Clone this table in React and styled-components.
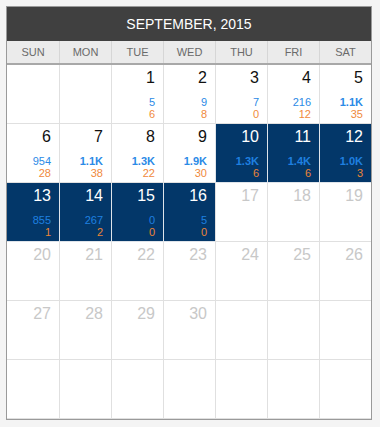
import React from 'react';
import styled, { createGlobalStyle } from 'styled-components';

const GlobalStyle = createGlobalStyle`
    body {
        margin: 0;
        padding: 6px;
        background: #f4f4f4;
        font-family: 'Liberation Sans', Arial, sans-serif;
    }
`;

const Calendar = styled.div`
    width: 364px;
    border: 1px solid #9a9a9a;
    background: #fff;
`;

const Title = styled.div`
    height: 34px;
    background: #404040;
    color: #fff;
    font-size: 14px;
    display: flex;
    align-items: center;
    justify-content: center;
`;

const DayNames = styled.div`
    display: grid;
    grid-template-columns: repeat(7, 52px);
    height: 22px;
    background: #ebebeb;
    border-bottom: 2px solid #a8a8a8;
`;

const DayName = styled.div`
    display: flex;
    align-items: center;
    justify-content: center;
    font-size: 11px;
    color: #6a6a6a;
    border-left: ${p => (p.$first ? 'none' : '1px solid #d6d6d6')};
`;

const Grid = styled.div`
    display: grid;
    grid-template-columns: repeat(7, 52px);
    grid-auto-rows: 59px;
`;

const Cell = styled.div`
    display: flex;
    flex-direction: column;
    align-items: flex-end;
    padding: 4px 8px 0 0;
    box-sizing: border-box;
    background: ${p => (p.$active ? '#033769' : '#fff')};
    border-left: ${p => (p.$first ? 'none' : `1px solid ${p.$active ? '#dfe4ea' : '#e0e0e0'}`)};
    border-bottom: 1px solid ${p => (p.$active ? '#dfe4ea' : '#e0e0e0')};
`;

const DayNum = styled.div`
    font-size: 16px;
    line-height: 18px;
    color: ${p => (p.$active ? '#fff' : p.$future ? '#c8c8c8' : '#111')};
`;

const Counts = styled.div`
    margin-top: 9px;
    display: flex;
    flex-direction: column;
    align-items: flex-end;
    font-size: 11px;
    line-height: 12px;
`;

const Visits = styled.span`
    color: ${p => (p.$active ? '#1f80e0' : '#2b8ae6')};
    font-weight: ${p => (p.$bold ? 'bold' : 'normal')};
`;

const Sales = styled.span`
    color: ${p => (p.$active ? '#ea8536' : '#f08a3c')};
`;

const stats = {
    1: ['5', '6'], 2: ['9', '8'], 3: ['7', '0'], 4: ['216', '12'], 5: ['1.1K', '35'],
    6: ['954', '28'], 7: ['1.1K', '38'], 8: ['1.3K', '22'], 9: ['1.9K', '30'],
    10: ['1.3K', '6'], 11: ['1.4K', '6'], 12: ['1.0K', '3'],
    13: ['855', '1'], 14: ['267', '2'], 15: ['0', '0'], 16: ['5', '0'],
};

const DAYS = ['SUN', 'MON', 'TUE', 'WED', 'THU', 'FRI', 'SAT'];

const cells = [];
for (let i = 0; i < 42; i++) {
    const day = i - 1;
    cells.push(day >= 1 && day <= 30 ? day : null);
}

const App = () => (
    <>
        <GlobalStyle />
        <Calendar>
            <Title>SEPTEMBER, 2015</Title>
            <DayNames>
                {DAYS.map((d, i) => (
                    <DayName key={d} $first={i === 0}>{d}</DayName>
                ))}
            </DayNames>
            <Grid>
                {cells.map((day, i) => {
                    const active = day >= 10 && day <= 16;
                    const s = day && stats[day];
                    return (
                        <Cell key={i} $first={i % 7 === 0} $active={active}>
                            {day && (
                                <DayNum $active={active} $future={day > 16}>{day}</DayNum>
                            )}
                            {s && (
                                <Counts>
                                    <Visits $active={active} $bold={s[0].endsWith('K')}>{s[0]}</Visits>
                                    <Sales $active={active}>{s[1]}</Sales>
                                </Counts>
                            )}
                        </Cell>
                    );
                })}
            </Grid>
        </Calendar>
    </>
);

export default App;
